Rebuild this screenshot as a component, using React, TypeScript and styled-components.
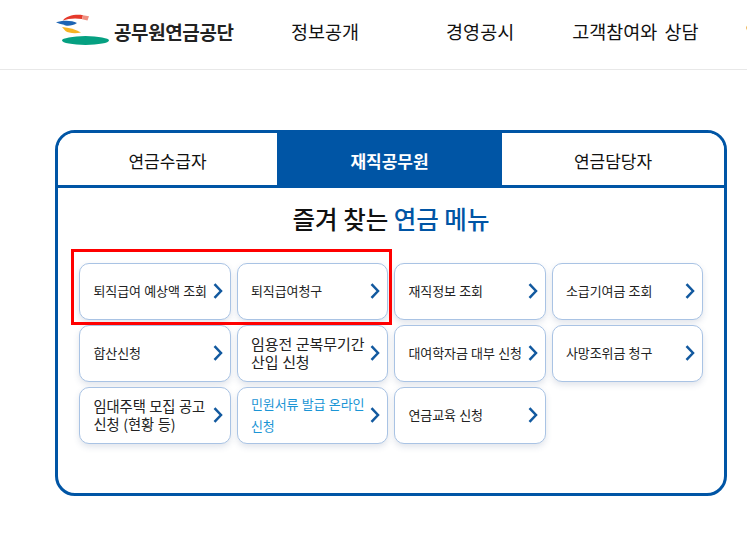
import React from 'react'
import styled, { createGlobalStyle } from 'styled-components'

const GlobalStyle = createGlobalStyle`
  html, body {
    margin: 0;
    padding: 0;
    background: #fff;
    overflow: hidden;
  }
  body {
    font-family: "Noto Sans CJK KR", "Noto Sans", sans-serif;
    color: #111;
  }
  * {
    box-sizing: border-box;
  }
`

const Page = styled.div`
  width: 747px;
  height: 548px;
  overflow: hidden;
  position: relative;
`

const Header = styled.header`
  height: 70px;
  border-bottom: 1px solid #e8e8e8;
  display: flex;
  align-items: flex-start;
  padding-left: 56px;
  white-space: nowrap;
`

const Logo = styled.div`
  flex: none;
  display: flex;
  align-items: flex-start;
  width: 235px;
  padding-top: 14px;
`

const LogoText = styled.span`
  font-size: 19px;
  font-weight: 700;
  color: #222;
  letter-spacing: -0.4px;
  line-height: 24px;
  margin: 6px 0 0 5px;
`

const Nav = styled.nav`
  display: flex;
  flex: none;
`

const NavItem = styled.a<{ $gap: number }>`
  font-size: 18.5px;
  line-height: 24px;
  word-spacing: 3px;
  margin-top: 18.5px;
  margin-right: ${props => props.$gap}px;
  color: #111;
`

const Card = styled.section`
  position: relative;
  width: 672px;
  height: 366px;
  margin: 60px 0 0 55px;
  border: 3px solid #0055a5;
  border-radius: 20px;
  overflow: hidden;
`

const Tabs = styled.div`
  display: grid;
  grid-template-columns: 219px 225px 1fr;
  height: 55px;
  border-bottom: 3px solid #0055a5;
`

const Tab = styled.div<{ $active?: boolean }>`
  display: flex;
  align-items: center;
  justify-content: center;
  padding-top: 2px;
  font-size: 17px;
  font-weight: ${props => (props.$active ? 700 : 400)};
  color: ${props => (props.$active ? '#fff' : '#111')};
  background: ${props => (props.$active ? '#0055a5' : '#fff')};
`

const Title = styled.h2`
  margin: 15px 0 0;
  text-align: center;
  font-size: 24.5px;
  line-height: 32px;
  font-weight: 500;
  color: #111;
`

const TitleAccent = styled.span`
  font-weight: 500;
  color: #0055a5;
`

const MenuGrid = styled.div`
  display: grid;
  grid-template-columns: repeat(4, 151.5px);
  grid-auto-rows: 56.5px;
  gap: 5.5px 6px;
  margin: 28px 0 0 21px;
`

const MenuButton = styled.a`
  display: flex;
  align-items: center;
  justify-content: space-between;
  padding: 0 7px 0 13.5px;
  border: 1px solid #a9c3e4;
  border-radius: 10px;
  background: #fff;
  box-shadow: 0 3px 6px rgba(60, 90, 130, 0.16);
`

const labelSizes = { small: '13px', medium: '14.3px', large: '15px' }

const MenuLabel = styled.span<{ $size?: keyof typeof labelSizes; $link?: boolean }>`
  font-size: ${props => labelSizes[props.$size ?? 'small']};
  line-height: ${props => (props.$link ? '22px' : props.$size ? '18.5px' : '18px')};
  color: ${props => (props.$link ? '#1b95d5' : '#222')};
  letter-spacing: -0.1px;
  word-spacing: 0.5px;
  white-space: pre-line;
`

const Arrow = styled.svg`
  flex: none;
  width: 10px;
  height: 16px;
  fill: none;
  stroke: #12599f;
  stroke-width: 2.5;
`

const Highlight = styled.div`
  position: absolute;
  left: 71px;
  top: 249px;
  width: 321px;
  height: 76px;
  border: 3px solid #ff0000;
  pointer-events: none;
`

const navItems = [
  { label: '정보공개', gap: 87 },
  { label: '경영공시', gap: 58 },
  { label: '고객참여와 상담', gap: 47 },
  { label: '알림', gap: 0 }
]

const tabs = [{ label: '연금수급자' }, { label: '재직공무원', active: true }, { label: '연금담당자' }]

const menus: { label: string; size?: keyof typeof labelSizes; link?: boolean }[] = [
  { label: '퇴직급여 예상액 조회' },
  { label: '퇴직급여청구' },
  { label: '재직정보 조회' },
  { label: '소급기여금 조회' },
  { label: '합산신청' },
  { label: '임용전 군복무기간\n산입 신청', size: 'large' },
  { label: '대여학자금 대부 신청' },
  { label: '사망조위금 청구' },
  { label: '임대주택 모집 공고\n신청 (현황 등)', size: 'medium' },
  { label: '민원서류 발급 온라인\n신청', link: true },
  { label: '연금교육 신청' }
]

function LogoMark() {
  return (
    <svg width="53" height="32" viewBox="0 0 53 32">
      <path d="M7 6.5 C10 1.5 20 0 27 1.2 L26 5 C19 3.8 12 4.5 7 6.5 Z" fill="#e5392b" />
      <path d="M27 1.2 L33 2.2 L31.5 6.5 L26 5.2 Z" fill="#ef8f80" />
      <path d="M0 8.2 C6 6 16 6 21 9 C17 12 10 12.5 8 10.8 C5 10 2 9.2 0 8.2 Z" fill="#1d64b4" />
      <path d="M6 13 C13 13.5 20 15.5 25 18.5 C19 20 12 19 9.5 17 Z" fill="#f6b323" />
      <ellipse cx="29.5" cy="26.5" rx="23.5" ry="4.4" fill="#05a081" />
    </svg>
  )
}

export default function App() {
  return (
    <Page>
      <GlobalStyle />
      <Header>
        <Logo>
          <LogoMark />
          <LogoText>공무원연금공단</LogoText>
        </Logo>
        <Nav>
          {navItems.map(item => (
            <NavItem key={item.label} $gap={item.gap}>
              {item.label}
            </NavItem>
          ))}
        </Nav>
      </Header>
      <Card>
        <Tabs>
          {tabs.map(tab => (
            <Tab key={tab.label} $active={tab.active}>
              {tab.label}
            </Tab>
          ))}
        </Tabs>
        <Title>
          즐겨 찾는 <TitleAccent>연금 메뉴</TitleAccent>
        </Title>
        <MenuGrid>
          {menus.map(menu => (
            <MenuButton key={menu.label}>
              <MenuLabel $size={menu.size} $link={menu.link}>
                {menu.label}
              </MenuLabel>
              <Arrow viewBox="0 0 10 16">
                <path d="M1.5 1.2 L8 8 L1.5 14.8" />
              </Arrow>
            </MenuButton>
          ))}
        </MenuGrid>
      </Card>
      <Highlight />
    </Page>
  )
}
